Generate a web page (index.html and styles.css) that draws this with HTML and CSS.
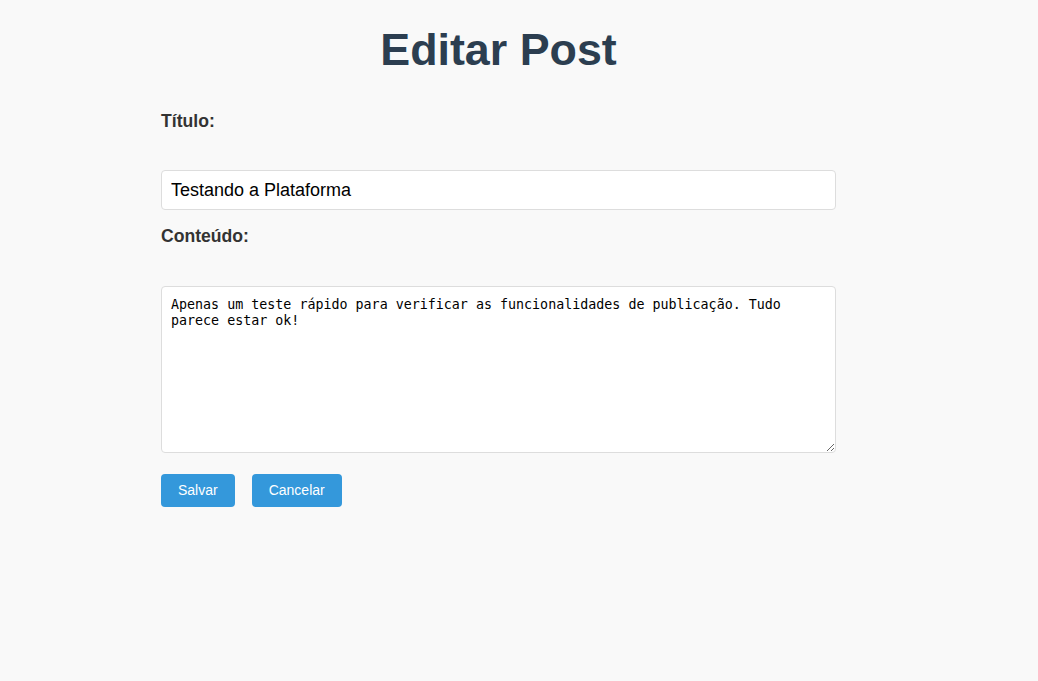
FILE: index.html
```html
<!DOCTYPE html>
<html lang="pt-BR">
<head>
<meta charset="utf-8">
<title>Editar Post</title>
<link rel="stylesheet" href="styles.css">
</head>
<body>
<main class="page">
  <h1 class="title">Editar Post</h1>
  <form class="post-form">
    <label class="field-label" for="titulo">Título:</label>
    <input class="text-input" id="titulo" type="text" value="Testando a Plataforma">
    <label class="field-label field-label--second" for="conteudo">Conteúdo:</label>
    <textarea class="text-area" id="conteudo">Apenas um teste rápido para verificar as funcionalidades de publicação. Tudo parece estar ok!</textarea>
    <div class="actions">
      <button type="submit" class="btn">Salvar</button>
      <button type="button" class="btn">Cancelar</button>
    </div>
  </form>
</main>
</body>
</html>
```
FILE: styles.css
```css
html, body {
  margin: 0;
  background: #f9f9f9;
}

body {
  font-family: "Liberation Sans", Arial, sans-serif;
  color: #333;
  padding-right: 41px;
}

.page {
  max-width: 675px;
  margin: 0 auto;
  padding-top: 24px;
}

.title {
  margin: 0 0 36px;
  text-align: center;
  font-size: 44.8px;
  font-weight: bold;
  color: #2c3e50;
}

.post-form {
  display: flex;
  flex-direction: column;
}

.field-label {
  display: block;
  font-weight: bold;
  font-size: 17.6px;
  line-height: 20px;
  color: #333;
  margin-bottom: 39px;
}

.field-label--second {
  margin-top: 16px;
  margin-bottom: 40px;
}

.text-input {
  box-sizing: border-box;
  width: 100%;
  height: 40px;
  margin: 0;
  padding: 0 9px;
  border: 1px solid #ddd;
  border-radius: 4px;
  background: #fff;
  font-family: "Liberation Sans", Arial, sans-serif;
  font-size: 18px;
  color: #000;
}

.text-area {
  box-sizing: border-box;
  width: 100%;
  height: 167px;
  margin: 0;
  padding: 10px 9px;
  border: 1px solid #ddd;
  border-radius: 4px;
  background: #fff;
  font-family: "DejaVu Sans Mono", monospace;
  font-size: 13.333px;
  line-height: 16px;
  color: #000;
}

.actions {
  display: flex;
  gap: 17px;
  margin-top: 21px;
}

.btn {
  margin: 0;
  padding: 8px 17px;
  border: none;
  border-radius: 4px;
  background: #3498db;
  color: #fff;
  font-family: "Liberation Sans", Arial, sans-serif;
  font-size: 14px;
  line-height: 17px;
  cursor: pointer;
}
```
